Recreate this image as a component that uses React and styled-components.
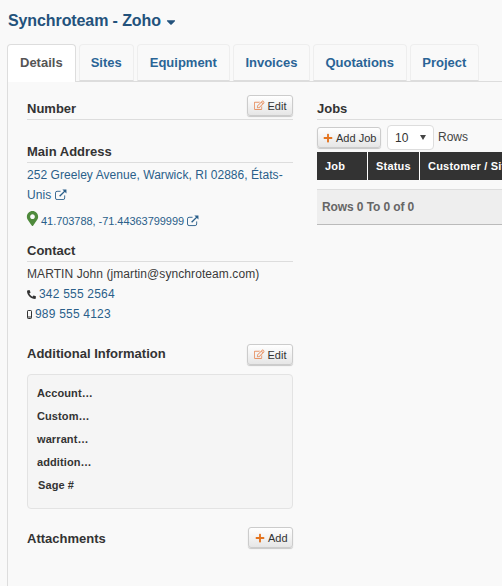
import React from "react";
import styled, { createGlobalStyle } from "styled-components";
import { FaCaretDown, FaPhone, FaMapMarkerAlt, FaPlus, FaRegEdit } from "react-icons/fa";

const Global = createGlobalStyle`
  html, body { margin: 0; padding: 0; background: #f9f9f9; }
  body { font-family: "Liberation Sans", Arial, sans-serif; font-size: 12px; color: #333; width: 502px; height: 586px; overflow: hidden; }
`;
const Page = styled.div`width: 502px; height: 586px; overflow: hidden; padding: 12px 0 0 7px; box-sizing: border-box;`;
const Title = styled.h1`
  margin: 0 0 0 1px; font-size: 16px; line-height: 18px; font-weight: 700; color: #23527c; height: 32px; letter-spacing: -.1px;
  display: flex; align-items: flex-start; gap: 3px;
  svg { margin-top: 3px; }
`;
const Tabs = styled.div`display: flex; gap: 3px; height: 37px; border-bottom: 1px solid #ddd; width: 495px;`;
const Tab = styled.div`
  height: ${p => (p.$active ? 38 : 37)}px; box-sizing: border-box; padding: 0 ${p => p.$pad || 12}px; font-size: 13px; font-weight: 700; line-height: 36px;
  border: 1px solid ${p => (p.$active ? "#ddd" : "#eee")}; border-bottom: ${p => (p.$active ? "none" : "1px solid #ddd")};
  border-radius: 4px 4px 0 0; background: ${p => (p.$active ? "#fff" : "transparent")}; color: ${p => (p.$active ? "#555" : "#2a6496")};
`;
const Panel = styled.div`
  border-left: 1px solid #ddd; padding: 0 0 0 19px; display: grid; grid-template-columns: 266px 185px; column-gap: 24px; height: 510px;
`;
const Left = styled.div`padding-top: 13px;`;
const Right = styled.div`padding-top: 18px; min-width: 0;`;
const HeadRow = styled.div`display: flex; justify-content: space-between; align-items: flex-start; height: ${p => p.$h}px; ${p => p.$line && "border-bottom: 1px solid #ddd;"}`;
const Heading = styled.h2`margin: ${p => p.$top || 0}px 0 0; font-size: 13px; font-weight: 700; line-height: 16px; color: #333;`;
const SmallBtn = styled.button`
  font: 11px "Liberation Sans", Arial, sans-serif; color: #333; height: 21px; padding: 0 6px; box-sizing: border-box; border: 1px solid #ccc; border-radius: 3px;
  width: ${p => p.$w || 46}px; background: linear-gradient(#fff, #e6e6e6); box-shadow: 0 1px 1px rgba(0,0,0,.2); display: inline-flex; align-items: center; gap: 3px; white-space: nowrap;
  svg { color: ${p => (p.$soft ? "#e79568" : "#e4741f")}; flex: none; }
`;
const Section = styled.section`margin-top: ${p => p.$top}px;`;
const SubHead = styled.h3`margin: 0; padding: 1px 0 2px; border-bottom: 1px solid #ddd; font-size: 13px; line-height: 16px; font-weight: 700; color: #333;`;
const Address = styled.div`font-size: 12px; line-height: 20px; color: #2a5f8a; margin-top: 2px; letter-spacing: .05px;`;
const Coord = styled.div`display: flex; align-items: center; font-size: 11px; height: 20px; margin-top: 6px; color: #2a5f8a; gap: 3px; letter-spacing: -.05px;`;
const Pin = styled(FaMapMarkerAlt)`margin: -6px -2px 0 -2px; flex: none;`;
const Lines = styled.div`margin-top: 2px;`;
const Line = styled.div`font-size: 12px; line-height: 20px; color: ${p => (p.$dark ? "#3a3a3a" : "#2a5f8a")}; display: flex; align-items: center; gap: ${p => p.$gap || 0}px; letter-spacing: ${p => (p.$dark ? ".08px" : ".2px")}; white-space: nowrap;`;
const Info = styled.div`
  height: 135px; box-sizing: border-box; margin-top: 9px; padding: 7px 9px; background: #f5f5f5; border: 1px solid #e3e3e3; border-radius: 4px;
`;
const InfoLabel = styled.div`font-size: 11px; font-weight: 700; line-height: 23px; color: #333; letter-spacing: .1px; padding-left: ${p => p.$indent || 0}px;`;
const Toolbar = styled.div`display: flex; align-items: flex-start; margin-top: 5px; height: 27px;`;
const AddBtn = styled(SmallBtn)`margin: 2px 6px 0 0; padding: 0 5px;`;
const Sel = styled.div`
  width: 47px; height: 25px; box-sizing: border-box; border: 1px solid #ddd; border-radius: 4px; background: #fff; display: flex; align-items: center; justify-content: space-between;
  padding: 0 7px; font-size: 12px; color: #333;
`;
const Tri = styled.span`width: 0; height: 0; border-left: 3px solid transparent; border-right: 3px solid transparent; border-top: 5px solid #444;`;
const Rows = styled.span`font-size: 12px; line-height: 20px; color: #444; margin: 2px 0 0 4px;`;
const TableHead = styled.div`display: flex; height: 28px; background: #333; color: #fff; font-size: 11px; font-weight: 700; line-height: 28px; overflow: hidden; white-space: nowrap; letter-spacing: .2px;`;
const Th = styled.div`width: ${p => p.$w}px; flex: none; box-sizing: border-box; padding-left: 8px; border-right: 1px solid #fff;`;
const Spacer = styled.div`height: 9px; border-bottom: 1px solid #ddd;`;
const Foot = styled.div`height: 34px; background: #eee; border-bottom: 1px solid #bbb; font-size: 12px; font-weight: 700; line-height: 35px; color: #666; padding-left: 5px; white-space: nowrap; letter-spacing: -.1px;`;
const ExtIcon = styled.svg`vertical-align: -1px; flex: none;`;

const Ext = ({ s = 12 }) => (
  <ExtIcon width={s} height={s * 0.92} viewBox="0 0 13 12" fill="none" stroke="currentColor">
    <path d="M10.5 7v2.8a1.7 1.7 0 0 1-1.7 1.7H2.2a1.7 1.7 0 0 1-1.7-1.7V4.2a1.7 1.7 0 0 1 1.7-1.7H6" />
    <path d="M5 8 11.5 1.5" strokeWidth="1.5" />
    <path d="M8 .6h4.4V5z" fill="currentColor" stroke="none" />
  </ExtIcon>
);
const Mobile = () => (
  <svg width="5" height="9" viewBox="0 0 5 9"><rect x=".5" y=".5" width="4" height="8" rx=".7" fill="none" stroke="#333" /><path d="M1 7h3" stroke="#333" /></svg>
);

export default function App() {
  return (
    <Page>
      <Global />
      <Title>Synchroteam - Zoho <FaCaretDown size={14} /></Title>
      <Tabs>
        <Tab $active>Details</Tab>
        <Tab $pad={11}>Sites</Tab>
        <Tab>Equipment</Tab>
        <Tab $pad={11.5}>Invoices</Tab>
        <Tab $pad={11.5}>Quotations</Tab>
        <Tab $pad={11.75}>Project</Tab>
      </Tabs>
      <Panel>
        <Left>
          <HeadRow $line $h={24}>
            <Heading $top={6}>Number</Heading>
            <SmallBtn $soft><FaRegEdit size={10.5} /> Edit</SmallBtn>
          </HeadRow>
          <Section $top={23}>
            <SubHead>Main Address</SubHead>
            <Address>252 Greeley Avenue, Warwick, RI 02886, États-Unis <Ext /></Address>
            <Coord><Pin size={15} color="#4f8a3c" />41.703788, -71.44363799999 <Ext s={12} /></Coord>
          </Section>
          <Section $top={11}>
            <SubHead>Contact</SubHead>
            <Lines>
              <Line $dark>MARTIN John (jmartin@synchroteam.com)</Line>
              <Line $gap={3}><FaPhone size={9} color="#333" style={{ transform: "scaleX(-1)" }} />342 555 2564</Line>
              <Line $gap={3}><Mobile />989 555 4123</Line>
            </Lines>
          </Section>
          <Section $top={20}>
            <HeadRow $h={21}>
              <Heading $top={2}>Additional Information</Heading>
              <SmallBtn $soft><FaRegEdit size={10.5} /> Edit</SmallBtn>
            </HeadRow>
            <Info>
              <InfoLabel>Account…</InfoLabel>
              <InfoLabel>Custom…</InfoLabel>
              <InfoLabel>warrant…</InfoLabel>
              <InfoLabel>addition…</InfoLabel>
              <InfoLabel $indent={1}>Sage #</InfoLabel>
            </Info>
          </Section>
          <Section $top={18}>
            <HeadRow $h={21}>
              <Heading $top={4}>Attachments</Heading>
              <SmallBtn $w={45}><FaPlus size={10} /> Add</SmallBtn>
            </HeadRow>
          </Section>
        </Left>
        <Right>
          <SubHead>Jobs</SubHead>
          <Toolbar>
            <AddBtn $w={64}><FaPlus size={10} /> Add Job</AddBtn>
            <Sel>10 <Tri /></Sel>
            <Rows>Rows</Rows>
          </Toolbar>
          <TableHead>
            <Th $w={51}>Job</Th>
            <Th $w={52}>Status</Th>
            <Th $w={120}>Customer / Site</Th>
          </TableHead>
          <Spacer />
          <Foot>Rows 0 To 0 of 0</Foot>
        </Right>
      </Panel>
    </Page>
  );
}
